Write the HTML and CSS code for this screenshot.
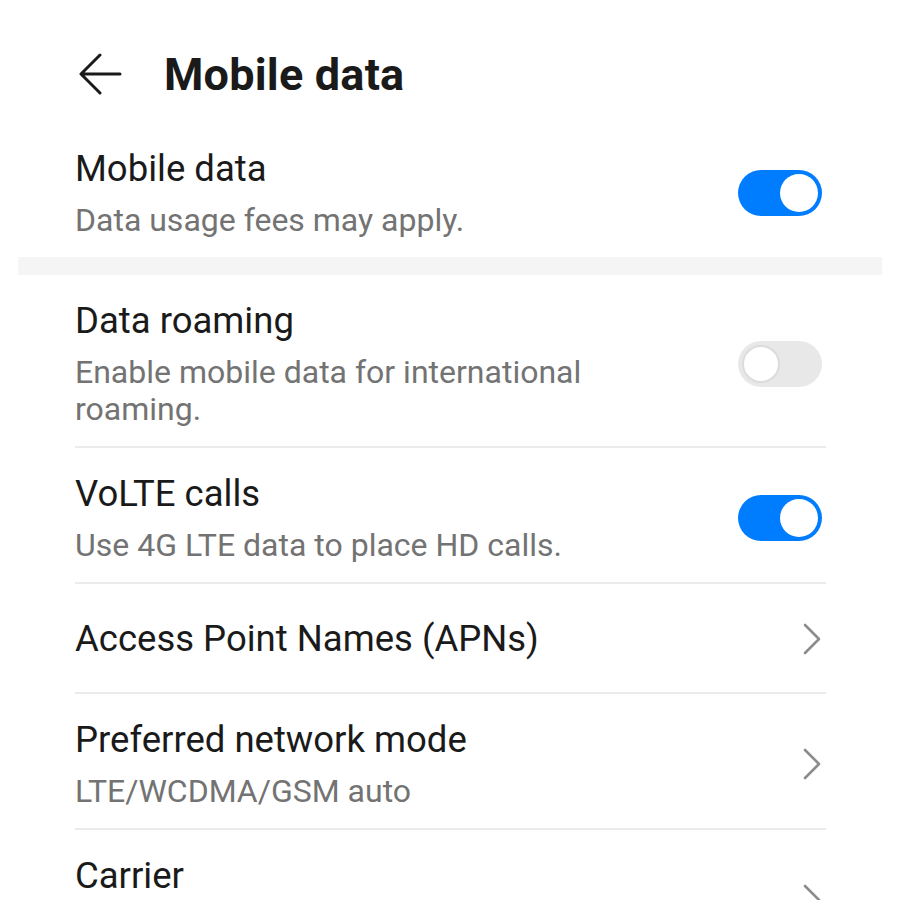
FILE: index.html
```html
<!DOCTYPE html>
<html lang="en">
<head>
<meta charset="utf-8">
<title>Mobile data</title>
<link rel="stylesheet" href="styles.css">
</head>
<body>
<div class="screen">
  <header class="header">
    <svg class="back" width="44" height="42" viewBox="0 0 44 42" aria-hidden="true">
      <path d="M42 21 H4 M22 2 L3 21 L22 40" fill="none" stroke="#1a1a1a" stroke-width="3" stroke-linecap="round" stroke-linejoin="round"/>
    </svg>
    <h1 class="title">Mobile data</h1>
  </header>

  <div class="list">
    <div class="row">
      <div class="text">
        <div class="label">Mobile data</div>
        <div class="sub">Data usage fees may apply.</div>
      </div>
      <div class="switch on"><span class="knob"></span></div>
    </div>
  </div>

  <div class="band"></div>

  <div class="list">
    <div class="row line">
      <div class="text">
        <div class="label">Data roaming</div>
        <div class="sub">Enable mobile data for international roaming.</div>
      </div>
      <div class="switch off"><span class="knob"></span></div>
    </div>
    <div class="row line">
      <div class="text">
        <div class="label">VoLTE calls</div>
        <div class="sub">Use 4G LTE data to place HD calls.</div>
      </div>
      <div class="switch on"><span class="knob"></span></div>
    </div>
    <div class="row line single">
      <div class="text">
        <div class="label">Access Point Names (APNs)</div>
      </div>
      <svg class="chev" width="20" height="32" viewBox="0 0 20 32" aria-hidden="true"><path d="M3 2 L17 16 L3 30" fill="none" stroke="#8c8c8c" stroke-width="2.6" stroke-linecap="round" stroke-linejoin="round"/></svg>
    </div>
    <div class="row line">
      <div class="text">
        <div class="label">Preferred network mode</div>
        <div class="sub">LTE/WCDMA/GSM auto</div>
      </div>
      <svg class="chev" width="20" height="32" viewBox="0 0 20 32" aria-hidden="true"><path d="M3 2 L17 16 L3 30" fill="none" stroke="#8c8c8c" stroke-width="2.6" stroke-linecap="round" stroke-linejoin="round"/></svg>
    </div>
    <div class="row">
      <div class="text">
        <div class="label">Carrier</div>
        <div class="sub">&nbsp;</div>
      </div>
      <svg class="chev" width="20" height="32" viewBox="0 0 20 32" aria-hidden="true"><path d="M3 2 L17 16 L3 30" fill="none" stroke="#8c8c8c" stroke-width="2.6" stroke-linecap="round" stroke-linejoin="round"/></svg>
    </div>
  </div>
</div>
</body>
</html>
```

FILE: styles.css
```css
html, body {
  margin: 0;
  padding: 0;
  background: #ffffff;
}

body {
  font-family: Roboto, "Noto Sans", "Liberation Sans", sans-serif;
  color: #1a1a1a;
  overflow: hidden;
}

.screen {
  width: 900px;
  height: 900px;
  overflow: hidden;
}

.header {
  height: 123px;
  display: flex;
  align-items: center;
  padding: 26px 0 0 78px;
  box-sizing: border-box;
}

.back {
  display: block;
  margin-top: -2px;
}

.title {
  margin: 0 0 0 42px;
  font-size: 45px;
  font-weight: 700;
  line-height: 52px;
  color: #1a1a1a;
  letter-spacing: 0.2px;
}

.list {
  padding: 0 74px 0 75px;
}

.row {
  display: flex;
  align-items: center;
  padding: 24px 0 18px;
}

.row.line {
  border-bottom: 2px solid #ebebeb;
}

.row.single {
  padding: 33px 0 32px;
}

.text {
  flex: 1;
  margin-right: 60px;
}

.label {
  font-size: 36.5px;
  line-height: 43px;
  color: #1a1a1a;
}

.sub {
  margin-top: 12px;
  font-size: 32px;
  line-height: 37px;
  color: #737373;
}

.band {
  height: 18px;
  margin: 0 18px;
  background: #f5f5f5;
}

.switch {
  width: 84px;
  height: 46px;
  border-radius: 23px;
  box-sizing: border-box;
  display: flex;
  align-items: center;
  padding: 0 4px;
  margin-right: 4px;
  flex: none;
}

.switch.on {
  background: #007dff;
  justify-content: flex-end;
}

.switch.off {
  background: #e8e8e8;
  justify-content: flex-start;
}

.knob {
  width: 38px;
  height: 38px;
  border-radius: 50%;
  background: #ffffff;
  box-sizing: border-box;
}

.switch.off .knob {
  border: 2px solid #dcdcdc;
}

.chev {
  display: block;
  flex: none;
  margin-right: 4px;
}
```
